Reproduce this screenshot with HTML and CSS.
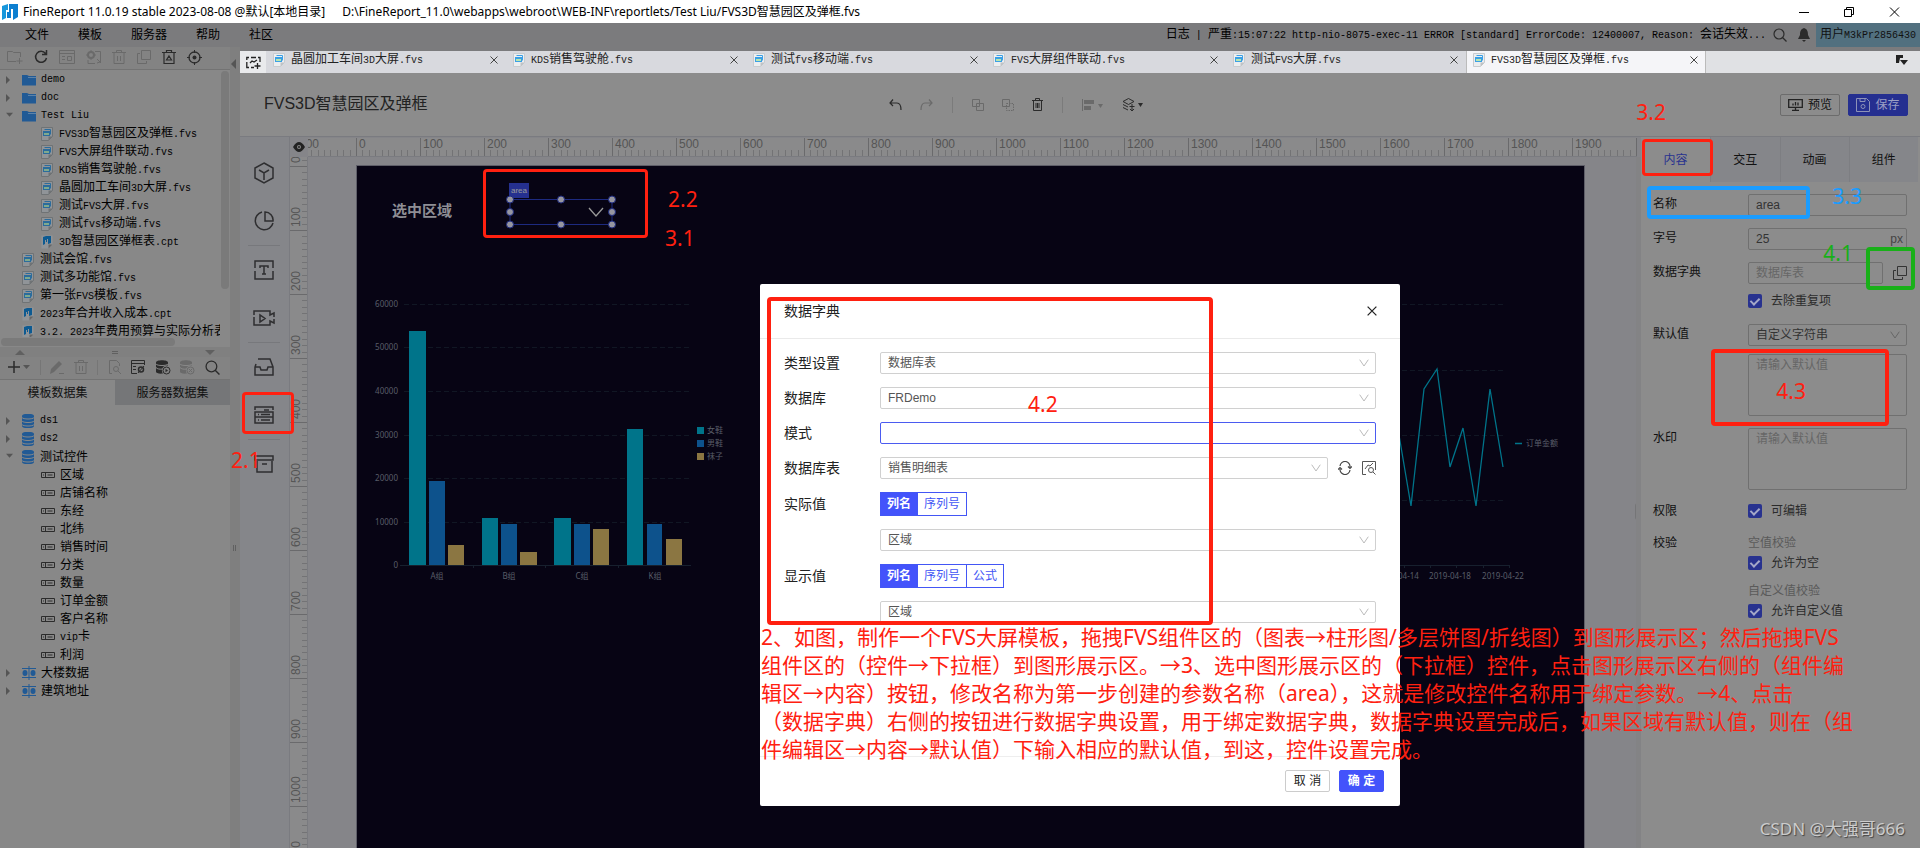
FILE: index.html
```html
<!DOCTYPE html>
<html lang="zh-CN">
<head>
<meta charset="utf-8">
<title>FineReport</title>
<link rel="stylesheet" href="styles.css">
</head>
<body>
<svg class="defs" aria-hidden="true">
  <symbol id="fvs" viewBox="0 0 12 14"><path d="M.5.5h11v9l-4 4h-7z" fill="#909498" stroke="#6f7375"/><path d="M7.500 13.500l4-4h-4z" fill="#6f7375"/><path d="M3.500 2.500h6v5" fill="none" stroke="#2b6c9c"/><path d="M2 4h7v5H2z" fill="#2b6c9c"/><path d="M3 6h5v2H3z" fill="#7fa98e"/></symbol>
  <symbol id="fvst" viewBox="0 0 12 14"><path d="M.5.5h11v9l-4 4h-7z" fill="#eceef0" stroke="#c8cbce"/><path d="M7.500 13.500l4-4h-4z" fill="#c0c3c6"/><path d="M3.500 2.500h6v5" fill="none" stroke="#3ba0e6"/><path d="M2 4h7v5H2z" fill="#3ba0e6"/><path d="M3 6h5v2H3z" fill="#b8e6b0"/></symbol>
  <symbol id="cpt" viewBox="0 0 12 14"><path d="M.5.500h11v9l-4 4h-7z" fill="#909498"/><path d="M7.500 13.500l4-4h-4z" fill="#666"/><path d="M2 2l3-1v4H4v4l-2 1zM5 1h5v7l-3 1V4H6v3H5z" fill="#0d5a91"/></symbol>
  <symbol id="folder" viewBox="0 0 14 12"><path d="M0 1h5l2 1h7v9.500H0z" fill="#215a95"/><path d="M6 3.500h8" stroke="#5c82a8"/></symbol>
  <symbol id="db" viewBox="0 0 12 14"><path d="M0 2c0-3 12-3 12 0v10c0 3-12 3-12 0z" fill="#215a95"/><path d="M0 3.500c1 2 11 2 12 0M0 7c1 2 11 2 12 0M0 10.500c1 2 11 2 12 0" fill="none" stroke="#888"/></symbol>
  <symbol id="field" viewBox="0 0 14 6"><path d="M.5.500h13v5H.5zM4.500.500v5M6.500 3h5M2 3h1" fill="none" stroke="#2c2c2c"/></symbol>
  <symbol id="link" viewBox="0 0 14 14"><path d="M7 0v14M0 2.500h14M0 11.500h14" stroke="#215a95" fill="none"/><ellipse cx="3" cy="7" rx="2.500" ry="3" fill="#215a95"/><ellipse cx="11" cy="7" rx="2.500" ry="3" fill="#215a95"/></symbol>
  <symbol id="trash" viewBox="0 0 14 14"><path d="M0 2.500h14M4.500 2V.500h5V2M2 3v10.500h10V3M5.500 6v5M8.500 6v5" fill="none" stroke="currentColor"/></symbol>
  <symbol id="search" viewBox="0 0 14 14"><circle cx="6" cy="6" r="5" fill="none" stroke="currentColor" stroke-width="1.200"/><path d="M9.500 9.500l4 4" stroke="currentColor" stroke-width="1.300"/></symbol>
  <symbol id="x" viewBox="0 0 8 8"><path d="M.5.500l7 7M7.500.500l-7 7" stroke="currentColor"/></symbol>
  <symbol id="v" viewBox="0 0 10 8"><path d="M.7.700L5 7 9.300.700" fill="none" stroke="currentColor"/></symbol>
  <symbol id="dbk" viewBox="0 0 15 15"><path d="M0 2.500c0-3 12-3 12 0v3h-2a5 5 0 0 0-3 8C3 14 0 13 0 12z" fill="currentColor"/><path d="M0 4c1 2 11 2 12 0M0 7.500c1 1.500 4 2 7 1.500" fill="none" stroke="#888"/><circle cx="10.500" cy="10.500" r="3.500" fill="none" stroke="currentColor"/></symbol>
</svg>

<header class="titlebar">
  <svg width="16" height="16" viewBox="0 0 16 16"><path d="M0 2l6-2v6H4v8l-4 2z" fill="#1797dc"/><path d="M7 0h9v13l-5 3V5H9v9H5V8h2z" fill="#0d7fd0"/></svg>
  <span>FineReport 11.0.19 stable 2023-08-08 @默认[本地目录]</span>
  <span class="path">D:\FineReport_11.0\webapps\webroot\WEB-INF\reportlets/Test Liu/FVS3D智慧园区及弹框.fvs</span>
  <svg class="win" width="102" height="14" viewBox="0 0 102 14"><path d="M0 7.500h10M45.500 4.500h7v7h-7zM47.500 4V2.500h7v7H53M91 2.500l9 9M100 2.500l-9 9" fill="none" stroke="#000"/></svg>
</header>

<nav class="menubar">
  <a href="#">文件</a><a href="#">模板</a><a href="#">服务器</a><a href="#">帮助</a><a href="#">社区</a>
  <div class="log">日志<span class="m"> | </span>严重<span class="m">:15:07:22 http-nio-8075-exec-11 ERROR [standard] ErrorCode: 12400007, Reason: </span>会话失效<span class="m">...</span></div>
  <svg class="dk" width="14" height="14"><use href="#search"/></svg>
  <svg class="bell" width="12" height="14" viewBox="0 0 12 14"><path d="M6 0c3 1 4 3 4 7l2 4H0l2-4c0-4 1-6 4-7zM4 12h4l-2 2z" fill="#2b2b2b"/></svg>
  <button class="user">用户<span class="m">M3kPr2856430</span></button>
</nav>

<div class="main">
  <aside class="side">
    <div class="tools t1">
      <svg class="lt" width="16" height="14" viewBox="0 0 16 14"><path d="M9 11.500H.5v-10h5l1 1h7V7M12.500 8v6M9.500 11h6" fill="none" stroke="currentColor"/></svg>
      <svg class="dk" width="14" height="14" viewBox="0 0 14 14"><path d="M11.500 3.500A5.500 5.500 0 1 0 12.500 8M12.500 0v4.500H8" fill="none" stroke="currentColor" stroke-width="1.500"/></svg>
      <svg class="lt" width="16" height="14" viewBox="0 0 16 14"><path d="M.5.500h15v13H.5zM.5 3.500h15M3 6.500h3M3 9.500h3M8.500 6.500h4v4h-4z" fill="none" stroke="currentColor"/></svg>
      <svg class="lt" width="16" height="14" viewBox="0 0 16 14"><circle cx="5" cy="5" r="3" fill="none" stroke="currentColor" stroke-width="2"/><path d="M5 0v10M0 5h10" stroke="currentColor" stroke-dasharray="2 6"/><path d="M9 1.500h5.500V13M2 10v3.500h7M11 9l3 3-3 1" fill="none" stroke="currentColor"/></svg>
      <svg class="lt" width="14" height="14"><use href="#trash"/></svg>
      <svg class="lt" width="14" height="14" viewBox="0 0 14 14"><path d="M4.500.500h9v9h-9zM3 3.500H.5v10h9V11" fill="none" stroke="currentColor"/></svg>
      <svg class="dk" width="14" height="14" viewBox="0 0 14 14"><path d="M0 2.500h14M4.500 2V.500h5V2M2 3v10.500h10V3M7 6l2.500 4h-5z" fill="none" stroke="currentColor" stroke-width="1.200"/></svg>
      <svg class="dk" width="15" height="15" viewBox="0 0 15 15"><circle cx="7.500" cy="7.500" r="5.500" fill="none" stroke="currentColor" stroke-width="1.300"/><circle cx="7.500" cy="7.500" r="2" fill="currentColor"/><path d="M7.500 0v3M7.500 12v3M0 7.500h3M12 7.500h3" stroke="currentColor"/></svg>
    </div>
    <div class="treebox">
      <ul class="tree">
        <li><i class="ar"></i><svg width="14" height="12"><use href="#folder"/></svg><span class="m">demo</span></li>
        <li><i class="ar"></i><svg width="14" height="12"><use href="#folder"/></svg><span class="m">doc</span></li>
        <li><i class="ar dn"></i><svg width="14" height="12"><use href="#folder"/></svg><span class="m">Test Liu</span></li>
        <li class="c"><svg width="12" height="14"><use href="#fvs"/></svg><span><span class="m">FVS3D</span>智慧园区及弹框<span class="m">.fvs</span></span></li>
        <li class="c"><svg width="12" height="14"><use href="#fvs"/></svg><span><span class="m">FVS</span>大屏组件联动<span class="m">.fvs</span></span></li>
        <li class="c"><svg width="12" height="14"><use href="#fvs"/></svg><span><span class="m">KDS</span>销售驾驶舱<span class="m">.fvs</span></span></li>
        <li class="c"><svg width="12" height="14"><use href="#fvs"/></svg><span>晶圆加工车间<span class="m">3D</span>大屏<span class="m">.fvs</span></span></li>
        <li class="c"><svg width="12" height="14"><use href="#fvs"/></svg><span>测试<span class="m">FVS</span>大屏<span class="m">.fvs</span></span></li>
        <li class="c"><svg width="12" height="14"><use href="#fvs"/></svg><span>测试<span class="m">fvs</span>移动端<span class="m">.fvs</span></span></li>
        <li class="c"><svg width="12" height="14"><use href="#cpt"/></svg><span><span class="m">3D</span>智慧园区弹框表<span class="m">.cpt</span></span></li>
        <li class="f"><svg width="12" height="14"><use href="#fvs"/></svg><span>测试会馆<span class="m">.fvs</span></span></li>
        <li class="f"><svg width="12" height="14"><use href="#fvs"/></svg><span>测试多功能馆<span class="m">.fvs</span></span></li>
        <li class="f"><svg width="12" height="14"><use href="#fvs"/></svg><span>第一张<span class="m">FVS</span>模板<span class="m">.fvs</span></span></li>
        <li class="f"><svg width="12" height="14"><use href="#cpt"/></svg><span><span class="m">2023</span>年合并收入成本<span class="m">.cpt</span></span></li>
        <li class="f"><svg width="12" height="14"><use href="#cpt"/></svg><span><span class="m">3.2. 2023</span>年费用预算与实际分析表</span></li>
      </ul>
      <div class="vs"></div>
    </div>
    <div class="hs"></div>
    <div class="split"><i class="up"></i><i class="eq"></i><i class="dw"></i></div>
    <div class="tools t2">
      <svg class="dk" width="22" height="12" viewBox="0 0 22 12"><path d="M6 0v12M0 6h12" stroke="currentColor" stroke-width="1.500"/><path d="M15 4h7l-3.500 4z" fill="#555"/></svg>
      <i class="sep"></i>
      <svg class="lt" width="14" height="14" viewBox="0 0 14 14"><path d="M0 14l1-5 8-8 3 3-8 8zM9 13h5v1H9z" fill="currentColor"/></svg>
      <svg class="lt" width="14" height="14"><use href="#trash"/></svg>
      <i class="sep"></i>
      <svg class="lt" width="14" height="14" viewBox="0 0 14 14"><path d="M4 13.500H1.500V.500h7l3 3V6" fill="none" stroke="currentColor"/><circle cx="8" cy="9" r="2.500" fill="none" stroke="currentColor"/><path d="M10 11l3 3" stroke="currentColor"/></svg>
      <svg class="dk" width="15" height="14" viewBox="0 0 15 14"><path d="M6 13.500H.5V.500h13V5M.5 3.500h13M2 6.500h3M2 9.500h3" fill="none" stroke="currentColor"/><circle cx="10" cy="9.500" r="2.500" fill="none" stroke="currentColor" stroke-width="1.500"/><path d="M7 13l6-7" stroke="currentColor"/></svg>
      <svg class="dk" width="15" height="15" viewBox="0 0 15 15"><use href="#dbk" width="15" height="15"/><path d="M9.500 8.800l2.500 1.700-2.500 1.700z" fill="currentColor"/></svg>
      <svg class="lt" width="15" height="15" viewBox="0 0 15 15"><use href="#dbk" width="15" height="15"/><path d="M9 9l3 3M12 9l-3 3" stroke="currentColor"/></svg>
      <svg class="dk" width="15" height="15"><use href="#search"/></svg>
    </div>
    <div class="dtabs"><button>模板数据集</button><button class="on">服务器数据集</button></div>
    <ul class="tree t">
      <li><i class="ar"></i><svg width="12" height="14"><use href="#db"/></svg><span class="m">ds1</span></li>
      <li><i class="ar"></i><svg width="12" height="14"><use href="#db"/></svg><span class="m">ds2</span></li>
      <li><i class="ar dn"></i><svg width="12" height="14"><use href="#db"/></svg><span>测试控件</span></li>
      <li class="c"><svg width="14" height="6"><use href="#field"/></svg><span>区域</span></li>
      <li class="c"><svg width="14" height="6"><use href="#field"/></svg><span>店铺名称</span></li>
      <li class="c"><svg width="14" height="6"><use href="#field"/></svg><span>东经</span></li>
      <li class="c"><svg width="14" height="6"><use href="#field"/></svg><span>北纬</span></li>
      <li class="c"><svg width="14" height="6"><use href="#field"/></svg><span>销售时间</span></li>
      <li class="c"><svg width="14" height="6"><use href="#field"/></svg><span>分类</span></li>
      <li class="c"><svg width="14" height="6"><use href="#field"/></svg><span>数量</span></li>
      <li class="c"><svg width="14" height="6"><use href="#field"/></svg><span>订单金额</span></li>
      <li class="c"><svg width="14" height="6"><use href="#field"/></svg><span>客户名称</span></li>
      <li class="c"><svg width="14" height="6"><use href="#field"/></svg><span><span class="m">vip</span>卡</span></li>
      <li class="c"><svg width="14" height="6"><use href="#field"/></svg><span>利润</span></li>
      <li><i class="ar"></i><svg width="14" height="14"><use href="#link"/></svg><span>大楼数据</span></li>
      <li><i class="ar"></i><svg width="14" height="14"><use href="#link"/></svg><span>建筑地址</span></li>
    </ul>
  </aside>
  <div class="gutter"><i class="gl"></i><i class="gg"></i></div>

  <section class="work">
    <div class="tabs">
      <button class="new" aria-label="新建"><svg width="15" height="13" viewBox="0 0 15 13"><path d="M3 1.500H.8V4M.8 6v5.500H3M5 1.500h5M12 1.500h2V6M5 11.500h3" fill="none" stroke="#222" stroke-width="1.300"/><path d="M4 7l2-2 2 1 3-2M11.500 7v6M8.500 10h6" fill="none" stroke="#222" stroke-width="1.300"/></svg></button>
      <div class="tab"><svg width="12" height="14"><use href="#fvst"/></svg><span>晶圆加工车间<span class="m">3D</span>大屏<span class="m">.fvs</span></span><svg class="x" width="8" height="8"><use href="#x"/></svg></div>
      <div class="tab"><svg width="12" height="14"><use href="#fvst"/></svg><span><span class="m">KDS</span>销售驾驶舱<span class="m">.fvs</span></span><svg class="x" width="8" height="8"><use href="#x"/></svg></div>
      <div class="tab"><svg width="12" height="14"><use href="#fvst"/></svg><span>测试<span class="m">fvs</span>移动端<span class="m">.fvs</span></span><svg class="x" width="8" height="8"><use href="#x"/></svg></div>
      <div class="tab"><svg width="12" height="14"><use href="#fvst"/></svg><span><span class="m">FVS</span>大屏组件联动<span class="m">.fvs</span></span><svg class="x" width="8" height="8"><use href="#x"/></svg></div>
      <div class="tab"><svg width="12" height="14"><use href="#fvst"/></svg><span>测试<span class="m">FVS</span>大屏<span class="m">.fvs</span></span><svg class="x" width="8" height="8"><use href="#x"/></svg></div>
      <div class="tab on"><svg width="12" height="14"><use href="#fvst"/></svg><span><span class="m">FVS3D</span>智慧园区及弹框<span class="m">.fvs</span></span><svg class="x" width="8" height="8"><use href="#x"/></svg></div>
      <svg class="more" width="12" height="10" viewBox="0 0 12 10"><path d="M0 0h7v3H4l-1 5H0zM4 5h8l-4 5z" fill="#222"/></svg>
    </div>
    <div class="head">
      <h1>FVS3D智慧园区及弹框</h1>
      <div class="acts">
        <svg class="dk" width="13" height="12" viewBox="0 0 13 12"><path d="M4 .5L1 4l3 3M1 4h7q4 0 4 7" fill="none" stroke="currentColor" stroke-width="1.200"/></svg>
        <svg class="lt" width="13" height="12" viewBox="0 0 13 12"><path d="M9 .5L12 4 9 7M12 4H5Q1 4 1 11" fill="none" stroke="currentColor" stroke-width="1.200"/></svg>
        <i></i>
        <svg class="lt" width="12" height="12" viewBox="0 0 12 12"><path d="M.5.500h7v7h-7zM4.500 4.500h7v7h-7z" fill="none" stroke="currentColor"/></svg>
        <svg class="lt" width="12" height="12" viewBox="0 0 12 12"><path d="M.5.500h7v7h-7z" fill="none" stroke="currentColor"/><path d="M4.500 4.500h7v7h-7z" fill="none" stroke="currentColor" stroke-dasharray="1.500 1"/></svg>
        <svg class="dk" width="11" height="13" viewBox="0 0 11 13"><path d="M0 2.500h11M3.500 2V.500h4V2M1.500 3v9.500h8V3M4 5v5M5.500 5v5M7 5v5" fill="none" stroke="currentColor"/></svg>
        <i></i>
        <svg class="lt" width="22" height="12" viewBox="0 0 22 12"><path d="M.5 0v12" stroke="currentColor"/><path d="M2 1h10v4H2zM2 7h7v4H2z" fill="currentColor"/><path d="M16 5h5l-2.500 4z" fill="currentColor"/></svg>
        <svg class="dk" width="22" height="13" viewBox="0 0 22 13"><path d="M1 3.500l5.500-3 5.500 3-5.500 3zM1 6.500l5 2.500M1 9.500l5 2.500M10 6v7M7.500 8.500h5M8 11l2 2 2-2" fill="none" stroke="currentColor"/><path d="M16 5h5l-2.500 4z" fill="currentColor"/></svg>
      </div>
      <div class="btns">
        <button class="prev"><svg width="15" height="12" viewBox="0 0 15 12"><path d="M.7.700h13.600v7.600H.7zM7.500 8v3M4 11.300h7M5 6.500v-2M7.500 6.500V3M10 6.500V3.500" fill="none" stroke="#222" stroke-width="1.300"/></svg>预览</button>
        <button class="save"><svg width="14" height="14" viewBox="0 0 14 14"><path d="M.5.500h10l3 3v10H.5zM4 .500v3h5v-3" fill="none" stroke="#8d92b8"/><circle cx="7" cy="8.500" r="2" fill="none" stroke="#8d92b8"/></svg>保存</button>
      </div>
    </div>
    <div class="body">
      <div class="rail">
        <svg width="20" height="22" viewBox="0 0 20 22"><path d="M10 1l9 5v10l-9 5-9-5V6zM5 8l5 3 5-3M10 11v7" fill="none" stroke="currentColor" stroke-width="1.500"/></svg>
        <svg width="20" height="22" viewBox="0 0 20 22"><path d="M8 2a9 9 0 1 0 11 11M11 2v9h8a8 8 0 0 0-8-9z" fill="none" stroke="currentColor" stroke-width="1.500"/></svg>
        <hr>
        <svg width="20" height="22" viewBox="0 0 20 22"><path d="M1 9V2h18v7M1 12v8h18v-8M6 9V7h8v2M10 7v8M8 15h4" fill="none" stroke="currentColor" stroke-width="1.500"/></svg>
        <svg width="22" height="22" viewBox="0 0 22 22"><path d="M1 8V4h16v4l4-2v4M1 10v8h16v-4l4 2v-4M7 8v7l5-3.500z" fill="none" stroke="currentColor" stroke-width="1.500"/></svg>
        <hr>
        <svg width="20" height="22" viewBox="0 0 20 22"><path d="M4 3h12l3 8v8H1v-8l1-3M1 11h5l1 3h6l1-3h5" fill="none" stroke="currentColor" stroke-width="1.500"/></svg>
        <svg width="20" height="22" viewBox="0 0 20 22"><path d="M1 6V3h18v3M1 8h18v5H1zM1 13v6h18v-6M10 6h5M4 10.500h1M7 10.500h9M4 16h1M7 16h9" fill="none" stroke="currentColor" stroke-width="1.500"/></svg>
        <hr>
        <svg width="20" height="22" viewBox="0 0 20 22"><path d="M1 3h18v4H1zM3 8v11h15V8M8 11h5" fill="none" stroke="currentColor" stroke-width="1.500"/></svg>
      </div>
      <div class="stage">
        <div class="corner"><svg width="12" height="10" viewBox="0 0 12 10"><path d="M0 5q6-10 12 0-6 10-12 0z" fill="#222"/><circle cx="6" cy="5" r="2" fill="#888"/><circle cx="6" cy="5" r="1" fill="#222"/></svg></div>
        <div class="hr">
          <svg class="tk" width="100%" height="18"><defs><pattern id="ph" x="48" width="64" height="18" patternUnits="userSpaceOnUse"><path d="M.5 0v18" stroke="#6a6a6c"/><path d="M6.500 12v6M13.500 12v6M19.500 12v6M26.500 12v6M32.500 12v6M38.500 12v6M45.500 12v6M51.500 12v6M58.500 12v6" stroke="#737375"/></pattern></defs><rect width="100%" height="18" fill="url(#ph)"/></svg>
          <div class="nums"><span>-100</span><span>0</span><span>100</span><span>200</span><span>300</span><span>400</span><span>500</span><span>600</span><span>700</span><span>800</span><span>900</span><span>1000</span><span>1100</span><span>1200</span><span>1300</span><span>1400</span><span>1500</span><span>1600</span><span>1700</span><span>1800</span><span>1900</span></div>
        </div>
        <div class="vr">
          <svg class="tk" width="18" height="100%"><defs><pattern id="pv" y="9" width="18" height="64" patternUnits="userSpaceOnUse"><path d="M0 .5h18" stroke="#6a6a6c"/><path d="M12 6.500h6M12 13.500h6M12 19.500h6M12 26.500h6M12 32.500h6M12 38.500h6M12 45.500h6M12 51.500h6M12 58.500h6" stroke="#737375"/></pattern></defs><rect width="18" height="100%" fill="url(#pv)"/></svg>
          <div class="nums"><span>0</span><span>100</span><span>200</span><span>300</span><span>400</span><span>500</span><span>600</span><span>700</span><span>800</span><span>900</span><span>1000</span><span>1100</span></div>
        </div>
        <div class="canvas">
          <div class="board">
            <svg class="charts" width="1228" height="683" viewBox="358 166 1228 683">
              <g stroke="#111724" stroke-dasharray="5 3"><path d="M405 304.500h286M405 347.500h286M405 391.500h286M405 435.500h286M405 478.500h286M405 522.500h286M1395 304.500h112M1395 370.500h112M1395 435.500h112M1395 500.500h112"/></g>
              <path d="M401 565.500h291M474.500 565v3M546.500 565v3M619.500 565v3M1395 565.500h116M1405.500 565v3M1431.500 565v3M1457.500 565v3M1484.500 565v3M1510.500 565v3" stroke="#17202e"/>
              <g fill="#00748a"><path d="M410 331h17v234h-17zM483 518h16v47h-16zM555 518h17v47h-17zM628 429h16v136h-16zM698 427h7v7h-7z"/></g>
              <g fill="#0d528c"><path d="M430 481h16v84h-16zM502 524h16v41h-16zM575 524h16v41h-16zM648 524h15v41h-15zM698 440h7v7h-7z"/></g>
              <g fill="#8b7642"><path d="M449 545h16v20h-16zM521 552h17v13h-17zM594 529h16v36h-16zM667 539h16v26h-16zM698 453h7v7h-7z"/></g>
              <path d="M1385 350L1400 435 1412 506 1425 389 1438 369 1451 467 1464 428 1477 506 1491 389 1504 467M1516 443.500h7" fill="none" stroke="#00748a" stroke-width="1.300"/>
              <g class="ct" text-anchor="end"><text x="399" y="307">60000</text><text x="399" y="350">50000</text><text x="399" y="394">40000</text><text x="399" y="438">30000</text><text x="399" y="481">20000</text><text x="399" y="525">10000</text><text x="399" y="568">0</text></g>
              <g class="ct" text-anchor="middle"><text x="438" y="579">A组</text><text x="510" y="579">B组</text><text x="583" y="579">C组</text><text x="656" y="579">K组</text><text x="1399" y="579">2019-04-14</text><text x="1451" y="579">2019-04-18</text><text x="1504" y="579">2019-04-22</text></g>
              <g class="ct"><text x="708" y="433">女鞋</text><text x="708" y="446">男鞋</text><text x="708" y="459">袜子</text><text x="1527" y="446">订单金额</text></g>
            </svg>
            <span class="pick">选中区域</span>
            <span class="tag">area</span>
            <svg class="ctl" width="110" height="34" viewBox="0 0 110 34"><path d="M4 4.500h102v25H4z" fill="none" stroke="#1d2a80"/><path d="M83 13l7 8 7-8" fill="none" stroke="#999" stroke-width="1.300"/><g fill="#9696a0" stroke="#1d2a80"><circle cx="4" cy="4.500" r="3.500"/><circle cx="55" cy="4.500" r="3.500"/><circle cx="106" cy="4.500" r="3.500"/><circle cx="4" cy="17" r="3.500"/><circle cx="106" cy="17" r="3.500"/><circle cx="4" cy="29.500" r="3.500"/><circle cx="55" cy="29.500" r="3.500"/><circle cx="106" cy="29.500" r="3.500"/></g></svg>
          </div>
          <i class="thumb"></i>
        </div>
      </div>
      <aside class="props">
        <div class="ptabs"><button class="on">内容</button><button>交互</button><button>动画</button><button>组件</button></div>
        <div class="form">
          <div class="row"><label for="nm">名称</label><input id="nm" value="area"></div>
          <div class="row"><label for="fs">字号</label><div class="sel"><input id="fs" value="25"><span class="px">px</span></div></div>
          <div class="row"><label for="dd">数据字典</label><input id="dd" placeholder="数据库表"><button class="pop" aria-label="数据字典设置"><svg width="14" height="14" viewBox="0 0 14 14"><path d="M4.500.500h9v9h-9zM3 4.500H.5v9h9V11" fill="none" stroke="#333"/></svg></button></div>
          <div class="row chk a"><span></span><label><input type="checkbox" checked>去除重复项</label></div>
          <div class="row b"><label for="df">默认值</label><div class="sel"><select id="df"><option>自定义字符串</option></select><svg width="10" height="8"><use href="#v"/></svg></div></div>
          <div class="row ta c"><span></span><textarea placeholder="请输入默认值" aria-label="默认值"></textarea></div>
          <div class="row ta"><label for="wm">水印</label><textarea id="wm" placeholder="请输入默认值"></textarea></div>
          <div class="row chk d"><span>权限</span><label><input type="checkbox" checked>可编辑</label></div>
          <div class="row chk e"><span>校验</span><em>空值校验</em></div>
          <div class="row chk f"><span></span><label><input type="checkbox" checked>允许为空</label></div>
          <div class="row chk d"><span></span><em>自定义值校验</em></div>
          <div class="row chk f"><span></span><label><input type="checkbox" checked>允许自定义值</label></div>
        </div>
      </aside>
    </div>
  </section>
</div>

<div class="mask">
<div class="dialog" role="dialog" aria-labelledby="dt">
  <div class="dh"><h2 id="dt">数据字典</h2><button aria-label="关闭"><svg width="10" height="10"><use href="#x"/></svg></button></div>
  <div class="db">
    <div class="dr"><label for="s1">类型设置</label><div class="sel"><select id="s1"><option>数据库表</option></select><svg width="10" height="8"><use href="#v"/></svg></div></div>
    <div class="dr"><label for="s2">数据库</label><div class="sel"><select id="s2"><option>FRDemo</option></select><svg width="10" height="8"><use href="#v"/></svg></div></div>
    <div class="dr"><label for="s3">模式</label><div class="sel foc"><select id="s3"><option></option></select><svg width="10" height="8"><use href="#v"/></svg></div></div>
    <div class="dr"><label for="s4">数据库表</label><div class="sel"><select id="s4"><option>销售明细表</option></select><svg width="10" height="8"><use href="#v"/></svg></div>
      <svg class="ric" width="14" height="14" viewBox="0 0 14 14"><path d="M2 5a5 5 0 0 1 10 1M12 9A5 5 0 0 1 2 8M10 5.500l2 2 2-2M0 8.500l2-2 2 2" fill="none" stroke="#444" stroke-width="1.200"/></svg>
      <svg class="ric" width="14" height="14" viewBox="0 0 14 14"><path d="M4 13.500H.5V.500h13V9M3 8l3-4 2 1 3-3" fill="none" stroke="#555"/><circle cx="9" cy="9" r="2.500" fill="none" stroke="#555"/><path d="M11 11l2.500 2.500" stroke="#555"/></svg></div>
    <div class="dr"><span>实际值</span><div class="seg"><button class="on">列名</button><button>序列号</button></div></div>
    <div class="dr"><span></span><div class="sel"><select aria-label="实际值列"><option>区域</option></select><svg width="10" height="8"><use href="#v"/></svg></div></div>
    <div class="dr"><span>显示值</span><div class="seg"><button class="on">列名</button><button>序列号</button><button>公式</button></div></div>
    <div class="dr"><span></span><div class="sel"><select aria-label="显示值列"><option>区域</option></select><svg width="10" height="8"><use href="#v"/></svg></div></div>
  </div>
  <div class="df"><button>取 消</button><button class="ok">确 定</button></div>
</div>
</div>

<div class="notes">
  <i class="box n21"></i><b class="l21">2.1</b>
  <i class="box n22"></i><b class="l22">2.2</b><b class="l31">3.1</b>
  <i class="box n32"></i><b class="l32">3.2</b>
  <i class="box n33"></i><b class="l33">3.3</b>
  <i class="box n41"></i><b class="l41">4.1</b>
  <i class="box n42"></i><b class="l42">4.2</b>
  <i class="box n43"></i><b class="l43">4.3</b>
  <p>2、如图，制作一个FVS大屏模板，拖拽FVS组件区的（图表→柱形图/多层饼图/折线图）到图形展示区；然后拖拽FVS<br>组件区的（控件→下拉框）到图形展示区。→3、选中图形展示区的（下拉框）控件，点击图形展示区右侧的（组件编<br>辑区→内容）按钮，修改名称为第一步创建的参数名称（area），这就是修改控件名称用于绑定参数。→4、点击<br>（数据字典）右侧的按钮进行数据字典设置，用于绑定数据字典，数据字典设置完成后，如果区域有默认值，则在（组<br>件编辑区→内容→默认值）下输入相应的默认值，到这，控件设置完成。</p>
  <span class="wmk">CSDN @大强哥666</span>
</div>
</body>
</html>
```
FILE: styles.css
```css
* { box-sizing: border-box; }
body { margin: 0; height: 100vh; overflow: hidden; display: flex; flex-direction: column; position: relative; background: #888; font: 12px/18px "Liberation Sans", "Noto Sans CJK SC", sans-serif; color: #111; }
button, input, select, textarea { font: inherit; color: inherit; margin: 0; }
button { background: none; border: 0; padding: 0; }
svg { display: block; flex: none; }
i, em { font-style: normal; }
.defs { position: absolute; width: 0; height: 0; }
.m { font-family: "Liberation Mono", monospace; font-size: 10px; white-space: pre; }
.dk { color: #2b2b2b; }
.lt { color: #6a6a6a; }

.titlebar { height: 23px; background: #fff; display: flex; align-items: center; padding: 0 16px 0 2px; gap: 5px; font-family: "Noto Sans", "Noto Sans CJK SC", sans-serif; color: #000; flex: none; }
.titlebar .path { margin-left: 12px; }
.win { margin-left: auto; margin-right: 3px; }
.menubar { height: 24px; background: #7b7b7d; display: flex; align-items: center; padding-left: 25px; gap: 29px; flex: none; white-space: nowrap; }
.menubar a { color: #000; text-decoration: none; }
.log { margin-left: auto; color: #000; }
.menubar .dk { margin-left: -22px; }
.bell { margin-left: -18px; }
.user { background: #52707f; height: 24px; width: 104px; margin-left: -23px; text-align: left; padding-left: 4px; white-space: nowrap; }

.main { flex: 1; display: flex; min-height: 0; }
.side { width: 230px; flex: none; background: #888; display: flex; flex-direction: column; }
.tools { display: flex; align-items: center; flex: none; background: #838383; border-bottom: 1px solid #737373; }
.t1 { height: 23px; padding: 0 28px 2px 7px; justify-content: space-between; }
.t2 { height: 23px; padding: 0 10px 2px 8px; justify-content: space-between; }
.sep { width: 1px; height: 15px; background: #767676; }
.treebox { height: 267px; overflow: hidden; display: flex; flex: none; padding-right: 1px; }
.treebox .tree { width: 220px; overflow: hidden; padding-top: 1px; }
.tree { list-style: none; margin: 0; padding: 0; flex: none; color: #000; }
.t { padding-top: 7px; }
.tree li { height: 18px; display: flex; align-items: center; gap: 5px; padding-left: 6px; white-space: nowrap; }
.tree li.c { padding-left: 41px; }
.treebox li.c { gap: 6px; }
.tree li.f { padding-left: 22px; gap: 6px; }
.tree .ar { width: 10px; flex: none; height: 8px; margin-right: 1px; background: linear-gradient(#555, #555) no-repeat; background-size: 4px 8px; clip-path: polygon(0 0, 40% 50%, 0 100%); }
.tree .ar.dn { background-size: 8px 5px; clip-path: polygon(0 10%, 70% 10%, 35% 60%); }
.tree svg[width="12"] { margin-right: 1px; }
.tree li.c svg[width="12"], .tree li.f svg[width="12"] { margin-right: 0; }
.vs { margin: 1px 0 0 auto; width: 8px; height: 218px; border-radius: 4px; background: #7a7a7a; }
.hs { height: 8px; width: 174px; margin: 1px 0 0 1px; border-radius: 4px; background: #7a7a7a; flex: none; }
.split { height: 10px; margin-top: 1px; background: #808080; display: flex; align-items: center; justify-content: space-between; padding: 0 15px; flex: none; }
.up, .dw { border: 5px solid transparent; border-bottom-color: #606060; border-top: 0; }
.dw { border-top: 5px solid #606060; border-bottom: 0; }
.eq { width: 6px; height: 3px; border: solid #606060; border-width: 1px 0; }
.dtabs { display: flex; height: 25px; flex: none; }
.dtabs button { flex: 1; }
.dtabs .on { background: #757678; }
.gutter { width: 10px; flex: none; background: #7f7f7f; position: relative; }
.gl { position: absolute; left: 1px; top: 12px; border: 5px solid transparent; border-right-color: #555; border-left: 0; }
.gg { position: absolute; left: 3px; top: 498px; width: 3px; height: 6px; border: solid #606060; border-width: 0 1px; }

.work { flex: 1; min-width: 0; display: flex; flex-direction: column; background: #8c8c8c; }
.tabs { height: 26px; border-top: 4px solid #7b7b7d; background: #e0e1e4; display: flex; flex: none; color: #222; }
.new { width: 26px; background: #e9eaec; display: grid; place-items: center; }
.tab { flex: 0 1 240px; background: #d8d9de; display: flex; align-items: center; padding: 0 8px 4px 7px; gap: 6px; white-space: nowrap; }
.tab.on { background: #f5f5f8; border-right: 1px solid #bbb; border-left: 1px solid #bbb; padding: 0 7px 4px 6px; }
.tab .x { margin-left: auto; color: #444; }
.more { margin: 4px 12px 0 auto; }
.head { height: 64px; border-bottom: 1px solid #7a7b80; display: flex; align-items: center; padding: 0 12px 0 24px; flex: none; }
h1 { margin: 0; font-size: 16px; line-height: 24px; font-weight: 400; color: #222; flex: 0 0 38%; padding-bottom: 2px; }
.acts { display: flex; align-items: center; gap: 18px; flex: none; }
.acts i { width: 1px; height: 16px; background: #7b7b7b; margin: 0 1px; }
.btns { flex: 1; display: flex; justify-content: flex-end; gap: 8px; }
.btns button { width: 60px; height: 22px; border: 1px solid #6c6c6c; border-radius: 2px; display: flex; align-items: center; justify-content: center; gap: 5px; }
.btns .save { background: #252f90; border-color: #252f90; color: #9b9fc4; }
.body { flex: 1; display: flex; min-height: 0; }
.rail { width: 50px; flex: none; background: #85868a; border-right: 1px solid #7a7b80; display: flex; flex-direction: column; align-items: center; padding: 25px 2px 0 0; gap: 26px; color: #2e2e30; }
.rail hr { width: 32px; height: 1px; border: 0; background: #77787c; margin: -13px 0; }
.stage { flex: 1; min-width: 0; display: grid; grid-template: 20px 1fr / 18px 1fr; background: #858589; overflow: hidden; }
.corner { display: grid; place-items: center; background: #858589; }
.hr { position: relative; overflow: hidden; margin-top: 1px; border-bottom: 1px solid #7a7b80; background: #8a8a8b; margin-right: 4px; }
.tk { position: absolute; left: 0; top: 0; }
.nums { display: flex; font-size: 12px; line-height: 12px; color: #555; position: relative; }
.hr .nums { margin-left: -16px; }
.nums span { flex: 0 0 64px; padding-left: 3px; }
.vr { position: relative; overflow: hidden; background: #8a8a8b; border-right: 1px solid #7a7b80; }
.vr .nums { flex-direction: column; margin-top: -55px; }
.vr .nums span { writing-mode: vertical-rl; transform: rotate(180deg); padding: 3px 0 0 0; width: 12px; }
.canvas { overflow: hidden; padding: 8px 51px 0 48px; border-right: 5px solid #838385; position: relative; }
.thumb { position: absolute; right: -5px; top: 346px; width: 6px; height: 17px; border-radius: 3px; background: #757577; }
.board { height: 100%; position: relative; background: #070414; border: solid #5e5e68; border-width: 1px 1px 0; overflow: hidden; }
.charts { position: absolute; left: 0; top: 0; }
.ct { font: 8px "Noto Sans", "Noto Sans CJK SC", sans-serif; fill: #595d68; }
.pick { position: absolute; left: 35px; top: 34px; font-size: 15px; line-height: 22px; font-weight: 700; color: #8e8e94; }
.tag { position: absolute; left: 152px; top: 17px; width: 20px; height: 15px; background: #25308f; color: #999; font-size: 8px; line-height: 16px; text-align: center; }
.ctl { position: absolute; left: 149px; top: 29px; }

.props { width: 279px; flex: none; background: #8c8c8c; }
.ptabs { display: grid; grid-template-columns: repeat(4, 1fr); height: 45px; padding-right: 2px; }
.ptabs button { background: #85868a; border-left: 1px solid #7d7e82; }
.ptabs .on { background: none; border: 0; color: #28328f; }
.form { padding: 12px 13px 0 12px; display: flex; flex-direction: column; }
.row { display: flex; margin-bottom: 12px; min-height: 22px; }
.row > :first-child { flex: 0 0 95px; line-height: 20px; }
.row > :nth-child(2) { flex: 1; min-width: 0; }
.form input:not([type]), .form textarea, .form select { width: 100%; height: 22px; background: transparent; border: 1px solid #707070; border-radius: 2px; padding: 0 7px; color: #333; outline: 0; line-height: 20px; }
.form textarea { height: 62px; resize: none; display: block; }
.form ::placeholder { color: #666; opacity: 1; }
.sel { position: relative; }
.sel select { appearance: none; }
.sel svg { position: absolute; right: 7px; top: 7px; color: #666; pointer-events: none; }
.px { position: absolute; right: 4px; top: 2px; color: #444; }
.pop { margin-left: 10px; align-self: center; }
.row.chk { min-height: 14px; height: 14px; margin-bottom: 0; }
.row.chk > * { line-height: 14px; }
.chk label { display: flex; align-items: center; gap: 9px; color: #2b2b2b; }
.chk em { color: #5a5a5a; }
.chk input { appearance: none; width: 14px; height: 14px; border-radius: 2px; background: #28328f; display: grid; place-items: center; }
.chk input::after { content: ""; width: 4px; height: 7px; border: solid #a5a8c8; border-width: 0 2px 2px 0; transform: rotate(45deg); margin-top: -2px; }
.row.a { margin-top: -2px; }
.row.b { margin-top: 16px; }
.row.c { margin-top: -4px; }
.row.d { margin-top: 14px; }
.form .ta + .d { margin-top: 2px; }
.row.e { margin-top: 18px; }
.row.f { margin-top: 6px; }

.mask { position: absolute; inset: 0; display: flex; justify-content: center; align-items: flex-start; padding: 284px 0 0 240px; }
.dialog { width: 640px; background: #fff; border-radius: 2px; color: #222; }
.dh { display: flex; justify-content: space-between; height: 55px; border-bottom: 1px solid #eaeaea; padding: 17px 23px 0 24px; align-items: flex-start; }
.dh button { padding-top: 5px; color: #222; }
h2 { margin: 0; font-size: 14px; line-height: 20px; font-weight: 400; }
.db { padding: 13px 24px 133px; display: flex; flex-direction: column; gap: 13px; }
.dr { display: flex; align-items: center; }
.dr > :first-child { flex: 0 0 96px; font-size: 14px; line-height: 20px; }
.dr .sel { flex: 1; }
.dr select { width: 100%; height: 22px; border: 1px solid #d0d0d0; border-radius: 2px; background: #fff; padding: 0 7px; color: #555; display: block; outline: 0; }
.dr .foc select { border-color: #4b5bf0; }
.dr .sel svg { color: #bbb; }
.ric { margin-left: 10px; }
.seg { display: flex; }
.seg button { height: 24px; padding: 0 6px; border: 1px solid #4356f5; color: #4356f5; margin-left: -1px; }
.seg button:first-child { margin-left: 0; }
.seg .on { background: #4353fb; color: #fff; font-weight: 700; }
.df { border-top: 1px solid #eee; padding: 13px 16px 14px; display: flex; justify-content: flex-end; gap: 9px; }
.df button { width: 45px; height: 22px; border: 1px solid #ccc; border-radius: 2px; background: #fff; }
.df .ok { background: #4353fb; border-color: #4353fb; color: #fff; font-weight: 700; }

.notes { position: absolute; inset: 0; pointer-events: none; color: #ff2010; font-family: "Noto Sans", "Noto Sans CJK SC", sans-serif; }
.notes > * { position: absolute; }
.box { border: 4px solid #ff2010; border-radius: 4px; }
.notes b { font: 21px/28px "Noto Sans", sans-serif; }
.n21 { left: 242px; top: 392px; width: 52px; height: 42px; border-width: 3px; }
.l21 { left: 231px; top: 446px; }
.n22 { left: 483px; top: 169px; width: 165px; height: 69px; border-width: 3px; }
.l22 { left: 668px; top: 185px; }
.l31 { left: 665px; top: 224px; }
.n32 { right: 207px; top: 139px; width: 71px; height: 37px; border-width: 3px; }
.l32 { right: 254px; top: 98px; }
.n33 { right: 110px; top: 186px; width: 163px; height: 33px; border-color: #1a9cff; }
.l33 { right: 58px; top: 182px; color: #1a9cff; }
.n41 { right: 5px; top: 247px; width: 49px; height: 43px; border-color: #18b018; }
.l41 { right: 67px; top: 239px; color: #18b018; }
.n42 { left: 767px; top: 297px; width: 446px; height: 328px; }
.l42 { left: 1028px; top: 390px; }
.n43 { right: 31px; top: 349px; width: 178px; height: 77px; }
.l43 { right: 114px; top: 377px; }
.notes p { left: 761px; top: 623px; margin: 0; font-size: 21px; line-height: 28px; white-space: nowrap; }
.wmk { right: 15px; bottom: 5px; font-size: 17px; line-height: 28px; color: #ccc; font-family: "Noto Sans", "Noto Sans CJK SC", sans-serif; text-shadow: 1px 1px 1px #444; }
```
